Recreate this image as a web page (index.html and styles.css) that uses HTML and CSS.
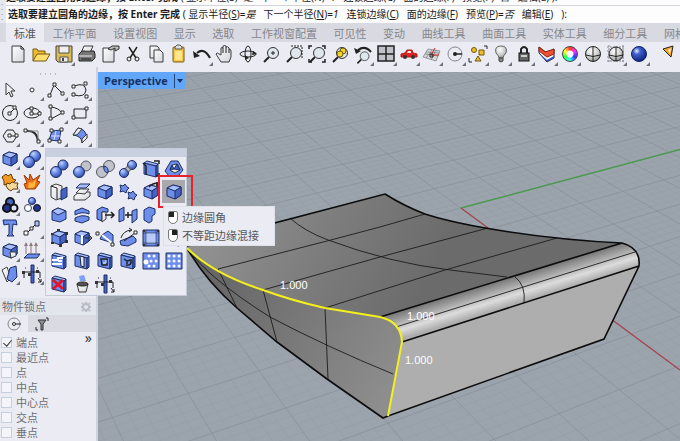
FILE: index.html
```html
<!DOCTYPE html>
<html lang="zh-CN">
<head>
<meta charset="utf-8">
<title>Rhino</title>
<link rel="stylesheet" href="styles.css">
</head>
<body>
<svg class="defs" aria-hidden="true">
  <defs>
    <radialGradient id="ball" cx=".35" cy=".3" r=".75"><stop offset="0" stop-color="#c4d4ff"/><stop offset=".45" stop-color="#6b8eea"/><stop offset="1" stop-color="#2c4aa8"/></radialGradient>
    <radialGradient id="deep" cx=".35" cy=".3" r=".75"><stop offset="0" stop-color="#e8efff"/><stop offset=".3" stop-color="#3f62cf"/><stop offset="1" stop-color="#0c1f7a"/></radialGradient>
    <radialGradient id="chrome" cx=".4" cy=".3" r=".8"><stop offset="0" stop-color="#fff"/><stop offset=".6" stop-color="#c9c9c9"/><stop offset="1" stop-color="#777"/></radialGradient>
    <linearGradient id="page" x2="1" y2="1"><stop offset="0" stop-color="#fff"/><stop offset="1" stop-color="#d4d6dc"/></linearGradient>
    <g id="cube"><path class="mid" d="M-7-4L-1-7 7-5V3L1 7-7 4Z"/><path class="lite" d="M-7-4L-1-7 7-5 1-1Z"/><path class="dark" d="M1-1L7-5V3L1 7Z"/></g>
    <g id="slab"><path class="lite" d="M-7-6L-4-8 7-5 5-3Z"/><path class="mid" d="M-7-6L5-3V8L-7 5Z"/><path class="dark" d="M5-3L7-5V6L5 8Z"/></g>
    <g id="lens"><path class="k w2" d="M-2 3L-7 8"/><circle class="glass" cx="2" cy="-1" r="5.5"/></g>
    <g id="ctrl"><path class="dark" d="M-1-9H2V9H-1Z"/><path class="k" d="M-8 4V-2H8V4M-7-6h1M5-6h1M6 4L9 8M9 8V5M9 8H6"/><path class="node fill" d="M-10-3h3v3h-3zM-4-1h3v3h-3zM4-4h3v3h-3z"/></g>
  </defs>
</svg>

<section class="command">
  <span class="grip tall"></span>
  <div class="command-lines">
    <p class="history"><b>选取要建立圆角的边缘，按 Enter 完成</b> ( 显示半径(S)=<i>是</i>&ensp; 下一个半径(N)=<i>1</i>&ensp; 连锁边缘(C)&ensp; 面的边缘(F)&ensp; 预览(P)=<i>否</i>&ensp; 编辑(E) ):</p>
    <p class="prompt"><b>选取要建立圆角的边缘，按 Enter 完成</b> ( <a href="#">显示半径(<u>S</u>)=<i>是</i></a><a href="#">下一个半径(<u>N</u>)=<i>1</i></a><a href="#">连锁边缘(<u>C</u>)</a><a href="#">面的边缘(<u>F</u>)</a><a href="#">预览(<u>P</u>)=<i>否</i></a><a href="#">编辑(<u>E</u>)</a>):</p>
  </div>
</section>

<nav class="tabs">
  <button class="tab active">标准</button><button class="tab">工作平面</button><button class="tab">设置视图</button><button class="tab">显示</button><button class="tab">选取</button><button class="tab">工作视窗配置</button><button class="tab">可见性</button><button class="tab">变动</button><button class="tab">曲线工具</button><button class="tab">曲面工具</button><button class="tab">实体工具</button><button class="tab">细分工具</button><button class="tab last">网格工具</button>
</nav>

<div class="toolbar">
  <button class="tool" aria-label="新建"><svg viewBox="-12 -12 24 24"><path class="sheet" d="M-6-8H3L6-5V8H-6Z"/><path class="k" d="M3-8V-5H6"/></svg></button>
  <button class="tool" aria-label="打开"><svg viewBox="-12 -12 24 24"><path class="gold" d="M-8 7V-5H-4L-3-3H4V0"/><path class="gold pale" d="M-8 7L-4 0H9L5 7Z"/></svg></button>
  <button class="tool more" aria-label="保存"><svg viewBox="-12 -12 24 24"><path fill="#d9ba55" stroke="#444" d="M-8-8H8V8H-6L-8 6Z"/><path fill="#eee" stroke="#555" d="M-5-8H5V-1H-5ZM-4 3H4V8H-4Z"/><path fill="#444" d="M-2 4H0V7H-2Z"/></svg></button>
  <button class="tool" aria-label="打印"><svg viewBox="-12 -12 24 24"><path class="sheet" d="M-3-8H6L3-1H-6Z"/><path fill="#777" stroke="#222" d="M-8 0L-5-3H7L8 0V4L5 7H-8Z"/><path stroke="#eee" d="M-8 2H5M-1-6H4M-2-4H3"/><path class="k" d="M-6 5H4"/></svg></button>
  <button class="tool" aria-label="文件属性"><svg viewBox="-12 -12 24 24"><path class="sheet" d="M-7-6H4V8H-7Z"/><path fill="#bbb" stroke="#333" d="M-2-5L2-8H9V-5L5-3V-6L1-4Z"/></svg></button>
  <button class="tool" aria-label="剪切"><svg viewBox="-12 -12 24 24"><path class="k w15" d="M-4-7L3 4M4-7L-3 4"/><circle class="k" cx="-4" cy="5" r="2"/><circle class="k" cx="4" cy="5" r="2"/></svg></button>
  <button class="tool" aria-label="复制"><svg viewBox="-12 -12 24 24"><path class="sheet" d="M-6-8H1L3-6V4H-6Z"/><path class="sheet" d="M-2-4H4L7-1V8H-2Z"/></svg></button>
  <button class="tool" aria-label="粘贴"><svg viewBox="-12 -12 24 24"><rect fill="#f5c947" stroke="#765b18" x="-6" y="-7" width="11" height="15" rx="1"/><path fill="#ddd" stroke="#555" d="M-4-7L-2-9H1L3-7V-5H-4Z"/><path fill="#ffe68c" d="M-4-3H3V6H-4Z"/></svg></button>
  <button class="tool more" aria-label="撤销"><svg viewBox="-12 -12 24 24"><path class="k w2" d="M-5-1Q2-7 8 4"/><path fill="#222" d="M-9-3L-8 4-2 2Z"/></svg></button>
  <button class="tool" aria-label="平移"><svg viewBox="-12 -12 24 24"><path class="sheet" d="M-4 8L-9 0Q-8-2-6 0L-4 1V-6Q-3-7-2-6V-8Q0-9 1-8V-7Q3-8 4-6V-5Q6-5 6-3V3L4 8Z"/><path class="k" d="M-2-6V-1M1-7V-1M4-5V-1"/></svg></button>
  <button class="tool" aria-label="旋转视图"><svg viewBox="-12 -12 24 24"><ellipse class="k" rx="8" ry="3"/><ellipse class="k" rx="3" ry="8"/><path fill="#222" d="M-3 1L1 4-3 6ZM5-3L9 0 4 1Z"/></svg></button>
  <button class="tool" aria-label="缩放"><svg viewBox="-12 -12 24 24"><use href="#lens"/><path class="k" d="M0-1H4M2-3V1"/></svg></button>
  <button class="tool" aria-label="框选缩放"><svg viewBox="-12 -12 24 24"><use href="#lens"/><path class="k dash" d="M-3-8H8V4"/></svg></button>
  <button class="tool" aria-label="缩放至最大范围"><svg viewBox="-12 -12 24 24"><use href="#lens"/><path class="k w15" d="M-8-5V-8H-5M5-8H8V-5M8 5V8H5M-8 5V8H-5"/></svg></button>
  <button class="tool" aria-label="缩放至选取物件"><svg viewBox="-12 -12 24 24"><use href="#lens"/><circle fill="#f4d328" stroke="#6b5a10" cx="3" cy="-3" r="3"/><circle fill="#f4d328" stroke="#6b5a10" cx="0" cy="0" r="3"/></svg></button>
  <button class="tool more" aria-label="复原视图"><svg viewBox="-12 -12 24 24"><g transform="translate(0 3) scale(.8)"><use href="#lens"/></g><path class="k w2" d="M-5-4Q2-9 8-2"/><path fill="#222" d="M-9-6L-7 0-2-3Z"/></svg></button>
  <button class="tool more" aria-label="四个工作视窗"><svg viewBox="-12 -12 24 24"><path fill="#bfc2c8" stroke="#222" stroke-width="1.5" d="M-8-8H8V7H-8ZM-8 0H8M0-8V7"/></svg></button>
  <button class="tool more" aria-label="载具"><svg viewBox="-12 -12 24 24"><path fill="#dc2222" stroke="#b01818" d="M-8 0L-4-1-2-4H3L4-1 8 0V3H-8Z"/><circle fill="#333" cx="-4" cy="3" r="2"/><circle fill="#333" cx="4" cy="3" r="2"/><path fill="#f7dede" d="M-2-1L-1-3H2V-1Z"/></svg></button>
  <button class="tool more" aria-label="工作平面"><svg viewBox="-12 -12 24 24"><path fill="#d5d7db" stroke="#777" stroke-width=".7" d="M-9 3L-4-5 8-3 4 7ZM-7 0L6 2M-6-2L7-1M-6 4L0-4M-1 6L4-4"/><path stroke="#d22" d="M-1 1L7 1M-1 1L3-6"/><path class="k" d="M-2 0h3v3h-3z"/></svg></button>
  <button class="tool more" aria-label="中心点"><svg viewBox="-12 -12 24 24"><circle class="thin" r="7"/><path class="k w15" d="M0 0H7"/><circle fill="#222" r="2"/></svg></button>
  <button class="tool more" aria-label="选取"><svg viewBox="-12 -12 24 24"><circle class="gold" cx="-4" cy="-4" r="2.5"/><path class="gold" d="M1-4H6V1H1ZM-3 7L0 2 3 7Z"/><path class="k" d="M6-8H9V-5M-9 4V8H-6"/></svg></button>
  <button class="tool more" aria-label="灯光"><svg viewBox="-12 -12 24 24"><path fill="url(#chrome)" stroke="#666" d="M-2 4Q-2 2-5-1Q-7-8 0-8Q7-8 5-1Q2 2 2 4Z"/><path fill="#888" stroke="#444" d="M-2 4H2V7L0 8-2 7Z"/></svg></button>
  <button class="tool more" aria-label="锁定"><svg viewBox="-12 -12 24 24"><path class="k w2" d="M-3-1V-5Q0-9 3-5V-1"/><rect fill="#666" stroke="#111" x="-5" y="-1" width="10" height="8"/><path fill="#ccc" d="M-3 1H3V3H-3Z"/></svg></button>
  <button class="tool more" aria-label="图层"><svg viewBox="-12 -12 24 24"><path fill="#f3f3f3" stroke="#222" d="M-8-1L0 8 7 4 7-5 0-1-8-7Z"/><path fill="#f04f36" stroke="#8c2414" d="M-8-7L-2-2 7-5V0L0 3-8-3Z"/><path fill="#344fba" d="M-7 0L0 6 7 2V4L0 8Z"/></svg></button>
  <button class="tool more" aria-label="物件属性"><span class="wheel"></span></button>
  <button class="tool" aria-label="着色"><svg viewBox="-12 -12 24 24"><circle fill="url(#chrome)" stroke="#222" r="7.5"/><path class="k" d="M0-7V7M-7 1Q0 4 7 1"/></svg></button>
  <button class="tool more" aria-label="渲染网格"><svg viewBox="-12 -12 24 24"><path class="thin dash" d="M-9-7H9M-9-3H9M-9 3H9M-9 7H9M-7-9V9M7-9V9"/><circle fill="url(#chrome)" stroke="#222" r="7"/><path class="k" d="M0-7V7M-7 1Q0 4 7 1"/></svg></button>
  <button class="tool more" aria-label="渲染"><svg viewBox="-12 -12 24 24"><circle fill="url(#deep)" stroke="#10205c" r="7.5"/></svg></button>
  <button class="tool spaced" aria-label="聚光灯"><svg viewBox="-12 -12 24 24"><path fill="#f7a22b" stroke="#222" d="M-5-5L5-8 3 3Z"/><path fill="#fff1c2" d="M0-4L3-6 2 0Z"/></svg></button>
</div>

<main class="workspace">
  <aside class="sidebar">
    <span class="grip wide"></span>
    <div class="tools four">
      <button class="tool" aria-label="选择"><svg viewBox="-12 -12 24 24"><path class="sheet" d="M-4-7V5L-1 2 1 7 3 6 1 1H5Z"/></svg></button>
      <button class="tool more" aria-label="点"><svg viewBox="-12 -12 24 24"><circle class="node" r="2"/></svg></button>
      <button class="tool more" aria-label="多重直线"><svg viewBox="-12 -12 24 24"><path class="k" d="M-6 5L-2-5 6 3"/><path class="node" d="M-8 4h3v3h-3zM-3-7h3v3h-3zM5 2h3v3h-3z"/></svg></button>
      <button class="tool more" aria-label="曲线"><svg viewBox="-12 -12 24 24"><path class="k" d="M-6-4Q5-8 6 0Q5 8-6 5"/><path class="node" d="M-8-5h3v3h-3zM4-8h3v3h-3zM-8 3h3v3h-3zM5 5h3v3h-3z"/></svg></button>
      <button class="tool more" aria-label="圆"><svg viewBox="-12 -12 24 24"><circle class="k" r="7.5"/><path class="k" d="M0 0L5-5"/><path class="node" d="M-2-1h3v3h-3zM3-7h3v3h-3z"/></svg></button>
      <button class="tool more" aria-label="椭圆"><svg viewBox="-12 -12 24 24"><ellipse class="k" rx="8" ry="5"/><path class="k" d="M0-5V1H8"/><path class="node" d="M-2-6h3v3h-3zM-2-1h3v3h-3zM6-1h3v3h-3z"/></svg></button>
      <button class="tool more" aria-label="圆弧"><svg viewBox="-12 -12 24 24"><path class="k" d="M-5-6Q3-5 6 0L-5 6Z"/><path class="node" d="M-7-8h3v3h-3zM-7 4h3v3h-3zM5-2h3v3h-3z"/></svg></button>
      <button class="tool more" aria-label="矩形"><svg viewBox="-12 -12 24 24"><path class="k" d="M-6-4H6V5H-6Z"/><path class="node" d="M-8 3h3v3h-3zM5-6h3v3h-3z"/></svg></button>
      <button class="tool more" aria-label="多边形"><svg viewBox="-12 -12 24 24"><path class="k" d="M-3-6H3L7 0 3 6H-3L-7 0ZM0 0H6"/><path class="node" d="M-2-2h3v3h-3zM5-2h3v3h-3z"/></svg></button>
      <button class="tool more" aria-label="曲线圆角"><svg viewBox="-12 -12 24 24"><path class="k w2" d="M-5-5Q5-6 6 6"/><path class="thin" d="M-5-5H6V6"/><path class="node" d="M-8-7h3v3h-3zM5 4h3v3h-3z"/></svg></button>
      <button class="tool more" aria-label="曲面"><svg viewBox="-12 -12 24 24"><path class="mid" d="M-4-5L5-6 3 5-7 4Z"/><path stroke="#d9e3ff" d="M-5 0L4 0M0-5L-2 4"/><path class="node" d="M-6-7h3v3h-3zM4-8h3v3h-3zM-8 3h3v3h-3zM2 4h3v3h-3z"/></svg></button>
      <button class="tool more" aria-label="扫掠曲面"><svg viewBox="-12 -12 24 24"><path class="mid" d="M-2-8Q6-7 7 2L2 7Q2 0-7-1Z"/><path class="sheet" d="M-7-1L-2-8 2-7-3-1Z"/><path class="sheet" d="M2 7L2 3 7-2V2Z"/></svg></button>
    </div>
    <div class="tools two">
      <button class="tool more" aria-label="立方体"><svg viewBox="-12 -12 24 24"><use href="#cube"/></svg></button>
      <button class="tool more" aria-label="布尔运算"><svg viewBox="-12 -12 24 24"><circle class="ball" cx="3" cy="-3" r="5.5"/><circle class="ball" cx="-3" cy="3" r="5.5"/></svg></button>
      <button class="tool more" aria-label="组合"><svg viewBox="-12 -12 24 24"><path fill="#f29b20" stroke="#5f3c06" d="M-8-5L-4-8-2-6 1-8 3-3 6-2 3 1 2 3-2 2-6 3-6-1Z"/><path fill="#f7d89a" stroke="#5f3c06" d="M-3 1L0 2 2 0 5 1 8 1 7 4 8 7 3 7 1 9-2 7-4 4Z"/></svg></button>
      <button class="tool" aria-label="炸开"><svg viewBox="-12 -12 24 24"><path fill="#ef6c17" stroke="#9c3a06" d="M-8-7L-3-2-2-8 1-2 8-7 5-1 8 0 3 7H-6L-8 2-5 1Z"/><path fill="#ffb43a" d="M-3 0L0 1 4-3 3 4 1 6H-4Z"/></svg></button>
      <button class="tool more" aria-label="群组"><svg viewBox="-12 -12 24 24"><circle fill="#4467bf" stroke="#111" stroke-width="2" cy="-3" r="4"/><circle fill="#22348c" stroke="#111" stroke-width="2" cx="-3" cy="3" r="4"/><circle fill="#dde4fa" stroke="#111" stroke-width="2" cx="4" cy="3" r="3.5"/></svg></button>
      <button class="tool" aria-label="取消群组"><svg viewBox="-12 -12 24 24"><circle class="ball" cy="-4" r="3.5"/><circle fill="#fff" stroke="#345" cx="-4" cy="3" r="3.5"/><circle fill="#22348c" stroke="#111" cx="5" cy="3" r="3.5"/></svg></button>
      <button class="tool" aria-label="文字"><svg viewBox="-12 -12 24 24"><path class="mid" d="M-7-8H6L7-3 3-4 2 6 4 8H-3L-1 6-1-4-6-3Z"/></svg></button>
      <button class="tool more" aria-label="移动"><svg viewBox="-12 -12 24 24"><path class="k" d="M-4 4L3-3"/><path fill="#abc0ff" stroke="#223" d="M3-7h4v5H3z"/><path class="node" d="M-8 3h4v4h-4zM-2-1h3v3h-3z"/></svg></button>
      <button class="tool more" aria-label="实体编辑"><svg viewBox="-12 -12 24 24"><use href="#cube"/><path class="sheet" d="M0 1H6V5L1 7Z"/></svg></button>
      <button class="tool more" aria-label="投影"><svg viewBox="-12 -12 24 24"><path class="mid" d="M-8 7L-4 3H8L5 7Z"/><path stroke="#8d7878" d="M-6-7V3M-1-7V3M4-7V3"/><path fill="#8d7878" d="M-8-5h4L-6-9zM-3-5h4L-1-9zM2-5h4L4-9z"/></svg></button>
      <button class="tool more" aria-label="偏移"><svg viewBox="-12 -12 24 24"><path class="sheet" d="M-8-4L-3-7 1 4-3 8Z"/><path class="mid" d="M0-6L6-8 7 3 2 8-3 5Z"/></svg></button>
      <button class="tool more" aria-label="控制点"><svg viewBox="-12 -12 24 24"><use href="#ctrl"/></svg></button>
    </div>

    <section class="osnap">
      <header class="osnap-title"><span>物件锁点</span><svg class="gear" viewBox="-6 -6 12 12"><circle r="3" fill="none" stroke="#b9bcc4" stroke-width="2"/><path stroke="#b9bcc4" stroke-width="2" d="M0-5V-3M0 3V5M-5 0H-3M3 0H5M-4-4L-3-3M3-3L4-4M-4 4L-3 3M3 3L4 4"/></svg></header>
      <div class="osnap-tabs">
        <button class="otab on" aria-label="锁点"><svg viewBox="-12 -12 24 24"><circle class="thin" r="6"/><circle class="node" r="1.5"/><path class="k" d="M1 0H7"/></svg></button>
        <button class="otab" aria-label="过滤器"><svg viewBox="-12 -12 24 24"><path fill="#8d8f96" stroke="#333" d="M-4-4H4L1 0V6H-1V0Z"/><path class="k" d="M4-6H6V-3M-6 3V6H-4"/></svg></button>
      </div>
      <div class="snaps">
        <div class="snap-list">
          <label><input type="checkbox" checked>端点</label>
          <label><input type="checkbox">最近点</label>
          <label><input type="checkbox">点</label>
          <label><input type="checkbox">中点</label>
          <label><input type="checkbox">中心点</label>
          <label><input type="checkbox">交点</label>
          <label><input type="checkbox">垂点</label>
        </div>
        <button class="expand" aria-label="展开">»</button>
      </div>
    </section>
  </aside>

  <section class="viewport">
    <svg class="scene" viewBox="98 72 582 369" preserveAspectRatio="xMinYMin slice">
      <defs>
        <linearGradient id="top" gradientUnits="userSpaceOnUse" x1="230" y1="200" x2="420" y2="300"><stop offset="0" stop-color="#909090"/><stop offset=".5" stop-color="#7c7c7c"/><stop offset="1" stop-color="#6b6b6b"/></linearGradient>
        <linearGradient id="side" gradientUnits="userSpaceOnUse" x1="190" y1="250" x2="400" y2="380"><stop offset="0" stop-color="#606060"/><stop offset="1" stop-color="#8e8e8e"/></linearGradient>
        <linearGradient id="fillet" gradientUnits="userSpaceOnUse" x1="510" y1="277" x2="518" y2="303"><stop offset="0" stop-color="#747474"/><stop offset=".4" stop-color="#b0b0b0"/><stop offset=".68" stop-color="#dcdcdc"/><stop offset="1" stop-color="#adadad"/></linearGradient>
      </defs>
      <g id="grid"></g>
      <path class="axis-y" d="M461 208L680 149.5"/>
      <path class="axis-x" d="M461 208L680 370"/>
      <path fill="url(#top)" d="M187 246L385 194Q404 206 425 214C462 226 540 239 622 243L380 317Q353 313 325 308Q290 300 263 290Q213 274 187 248Z"/>
      <path fill="url(#side)" d="M187 248Q213 274 263 290Q290 300 325 308L380 317Q401 322 402 342L388 416 383 418 327 379 277 342 237 308Q205 280 187 248Z"/>
      <path fill="url(#fillet)" d="M380 317L622 243Q640 248 639 266L402 342Q401 322 380 317Z"/>
      <path fill="#aeaeae" d="M402 342L639 266 604 339 388 416Z"/>
      <path class="iso" d="M218 269L327 241 380 227 425 214M263 290L380 257 488 228M325 308L445 270 557 238M290 218Q304 231 328 240 Q390 263 450 270L507 277M218 269L237 308M263 290L277 342M325 308L328 379M187 248Q208 278 270 317 Q327 347 393 374M515 277Q526 285 524 303M396 327L635 252"/>
      <path class="edge" d="M187 246L385 194Q404 206 425 214C462 226 540 239 622 243Q641 248 639 266L604 339 388 416 383 418 327 379 277 342 237 308Q205 280 187 248M380 317L622 243M402 342L639 266"/>
      <path class="picked" d="M187 248Q213 274 263 290Q290 300 325 308L380 317Q401 322 402 342L388 416"/>
      <g class="radii"><text x="280" y="289">1.000</text><text x="407" y="320">1.000</text><text x="405" y="364">1.000</text></g>
    </svg>
    <button class="view-name"><span>Perspective</span><span class="caret"></span></button>
  </section>

  <div class="palette">
    <div class="palette-head"></div>
    <div class="palette-grid">
      <button class="tool" aria-label="布尔联集"><svg viewBox="-12 -12 24 24"><circle class="ball" cx="4" cy="-4" r="5"/><circle class="ball" cx="-3" cy="3" r="5.5"/></svg></button>
      <button class="tool" aria-label="布尔差集"><svg viewBox="-12 -12 24 24"><circle class="ghost" cx="4" cy="-3" r="5"/><circle class="ball" cx="-3" cy="3" r="5.5"/></svg></button>
      <button class="tool" aria-label="布尔交集"><svg viewBox="-12 -12 24 24"><circle class="ghost" cx="4" cy="-3" r="5.5"/><circle class="ghost" cx="-3" cy="3" r="5.5"/><path class="mid" d="M-1-3Q4-2 3 4Q-2 3-1-3Z"/></svg></button>
      <button class="tool" aria-label="布尔分割"><svg viewBox="-12 -12 24 24"><circle class="ball" cx="4" cy="-4" r="4.5"/><circle class="ball" cx="-4" cy="4" r="4.5"/><circle class="ghost" cx="0" cy="0" r="2.5"/></svg></button>
      <button class="tool" aria-label="布尔运算两个物件"><svg viewBox="-12 -12 24 24"><use href="#slab"/><path class="k w15" d="M-8-6L-5-3V6M3-8H8V-5M5 7H8V4"/></svg></button>
      <button class="tool" aria-label="自动建立实体"><svg viewBox="-12 -12 24 24"><path class="mid" d="M-3-8H4L9 1 4 7H-5L-9 2Z"/><path class="sheet" d="M-2-4L3-5 6 1 1 4-4 1Z"/><path class="dark" d="M-2-4L0 0-4 1ZM3-5L6 1 0 0Z"/></svg></button>

      <button class="tool" aria-label="封闭的多重曲面薄壳"><svg viewBox="-12 -12 24 24"><path class="sheet" d="M-8-6L-3-8 3-6V6L-3 8-8 5Z"/><path class="k" d="M-8-6L-2-4V7"/><path class="dark" d="M2-2L8-5V5L2 8Z"/></svg></button>
      <button class="tool" aria-label="加盖"><svg viewBox="-12 -12 24 24"><path class="sheet" d="M-8 4L-3 0H8V4L3 8H-8Z"/><path class="sheet" d="M-6 1L-2-3H7L3 2Z"/><path class="lite" d="M-6-4L-2-8H8L4-4Z"/></svg></button>
      <button class="tool" aria-label="抽离曲面"><svg viewBox="-12 -12 24 24"><use href="#cube"/></svg></button>
      <button class="tool" aria-label="合并面"><svg viewBox="-12 -12 24 24"><path class="mid" d="M-8-7L-5-6-3-8-1-5 1-4-1-2-2 1-5-1-8 0-7-3ZM0 0L3 1 5-1 7 2 9 3 7 5 6 8 3 6 0 7 1 4Z"/></svg></button>
      <button class="tool" aria-label="不等距圆角"><svg viewBox="-12 -12 24 24"><use href="#cube"/><path class="k w15" d="M-2-5Q1-9 8-9"/><path class="node fill" d="M5-10h4v4H5z"/></svg></button>
      <button class="tool chosen" aria-label="边缘圆角"><svg viewBox="-12 -12 24 24"><use href="#cube"/></svg></button>

      <button class="tool" aria-label="线切割"><svg viewBox="-12 -12 24 24"><path class="mid" d="M-7-4L-1-7 7-4V4L1 7-7 5Z"/><path class="lite" d="M-7-4L-1-7 7-4-1 0Z"/></svg></button>
      <button class="tool" aria-label="分割"><svg viewBox="-12 -12 24 24"><path class="mid" d="M-7-4L0-7 7-4V-1Q0-4-7 0ZM-7 3Q0-1 7 2V5L0 8-7 6Z"/></svg></button>
      <button class="tool" aria-label="推拉面"><svg viewBox="-12 -12 24 24"><path class="mid" d="M-8-5L-3-8 3-6V-3H-3V6L-8 4Z"/><path class="sheet" d="M-3-3H1V4L-3 7Z"/><path class="k w15" d="M0 0H9M6-3L9 0 6 3"/></svg></button>
      <button class="tool" aria-label="移动面"><svg viewBox="-12 -12 24 24"><path class="mid" d="M-9-5L-4-8V5L-9 7ZM4-4L9-6V4L4 8Z"/><path class="k w15" d="M-3 0H4M0-3V3"/></svg></button>
      <button class="tool" aria-label="移动边缘"><svg viewBox="-12 -12 24 24"><path class="mid" d="M-7-5L-2-8 4-6V-1L1 1V6L-2 8-7 5Z"/></svg></button>
      <button class="tool" aria-label="旋转面"><svg viewBox="-12 -12 24 24"><use href="#cube"/></svg></button>

      <button class="tool" aria-label="打开控制点"><svg viewBox="-12 -12 24 24"><use href="#cube"/><path class="node fill" d="M-8-5h2v2h-2zM-2-9h3v2h-3zM6-6h3v3H6zM-8 4h3v2h-3zM0 6h3v3H0zM6 2h3v3H6z"/></svg></button>
      <button class="tool" aria-label="移动实体边缘"><svg viewBox="-12 -12 24 24"><use href="#cube"/><path class="k" d="M3 0H10M7-3L10 0 7 3"/><path stroke="#fff" stroke-width="2" d="M0-3V6"/></svg></button>
      <button class="tool" aria-label="楔形"><svg viewBox="-12 -12 24 24"><path class="mid" d="M-3-3L3-7 8-3V5L-5 1Z"/><path stroke="#fff" stroke-width="2" d="M-3-3L7 5"/><path class="node" d="M-9-6h3v3h-3zM6 5h3v3H6z"/></svg></button>
      <button class="tool" aria-label="旋转边缘"><svg viewBox="-12 -12 24 24"><path class="mid" d="M-8 3L5-2 8 1V4L0 8-7 7Z"/><path class="k" d="M-7 0Q-5-7 3-8M1-10L4-8 1-6M-4 3L7-5"/><path class="node" d="M6-7h3v3H6z"/></svg></button>
      <button class="tool" aria-label="挤出"><svg viewBox="-12 -12 24 24"><path class="mid" d="M-8-8H8V8H-8Z"/><path fill="#b9cbfd" d="M-5-5H5V5H-5Z"/><path class="k" d="M-5-8V8M5-8V8M-8-5H8M-8 5H8" stroke-opacity=".5"/><path class="node fill" d="M-8-8h2v2h-2zM6-8h2v2H6zM-8 6h2v2h-2zM6 6h2v2H6z"/></svg></button>
      <button class="tool" aria-label="凸缘"><svg viewBox="-12 -12 24 24"><use href="#slab"/></svg></button>

      <button class="tool" aria-label="肋"><svg viewBox="-12 -12 24 24"><use href="#slab"/><path stroke="#fff" stroke-width="2" fill="none" d="M-7-1H-1V-3H4M-7 3H3M-1 0H3"/></svg></button>
      <button class="tool" aria-label="圆洞"><svg viewBox="-12 -12 24 24"><use href="#slab"/><path fill="#dfe7ff" stroke="#223" d="M-2-5L2-4V6L-1 5Z"/></svg></button>
      <button class="tool" aria-label="放置洞"><svg viewBox="-12 -12 24 24"><use href="#slab"/><path class="k w15" d="M-4-2H2V4H-3Z"/><path stroke="#dfe7ff" d="M-2 2H1V-1"/></svg></button>
      <button class="tool" aria-label="旋转成洞"><svg viewBox="-12 -12 24 24"><use href="#slab"/><path class="k w15" d="M-4-2L-1 0 3-1Q4 5-2 4M-1 0V3"/></svg></button>
      <button class="tool" aria-label="环形阵列洞"><svg viewBox="-12 -12 24 24"><path class="mid" d="M-8-8H8V8H-8Z"/><path class="holes" d="M-2-5h.1M3-5h.1M0 0h.1M5 0h.1M-2 5h.1M3 5h.1"/><circle fill="#fff" cx="-5" cy="1" r="2.5"/></svg></button>
      <button class="tool" aria-label="阵列洞"><svg viewBox="-12 -12 24 24"><path class="mid" d="M-8-8H8V8H-8Z"/><path class="holes" d="M-5-5h.1M0-5h.1M5-5h.1M-5 0h.1M0 0h.1M5 0h.1M-5 5h.1M0 5h.1M5 5h.1"/></svg></button>

      <button class="tool" aria-label="删除洞"><svg viewBox="-12 -12 24 24"><use href="#slab"/><path stroke="#e3132a" stroke-width="3" d="M-6-4L4 5M4-4L-6 5"/></svg></button>
      <button class="tool" aria-label="移除"><svg viewBox="-12 -12 24 24"><path class="sheet" d="M-5 0H6L4 8H-3Z"/><ellipse fill="#555" stroke="#222" cx=".5" cy="0" rx="5.5" ry="2"/><path fill="#7f9ff8" d="M-3-8L2-9 4-3H-2Z"/></svg></button>
      <button class="tool" aria-label="控制点编辑"><svg viewBox="-12 -12 24 24"><use href="#ctrl"/></svg></button>
    </div>
    <span class="callout"></span>
    <div class="tip">
      <p><span class="mouse left"></span>边缘圆角</p>
      <p><span class="mouse right"></span>不等距边缘混接</p>
    </div>
  </div>
</main>
<script src="grid.js"></script>
</body>
</html>
```
FILE: styles.css
```css
* { box-sizing: border-box; }
html, body { height: 100%; }
body {
  margin: 0;
  display: flex;
  flex-direction: column;
  overflow: hidden;
  background: #ebecf3;
  color: #1c1c1c;
  font: 11px/15px "Noto Sans", "Noto Sans CJK SC", sans-serif;
}
p { margin: 0; }
button { margin: 0; padding: 0; border: 0; background: none; color: inherit; font: inherit; }
.defs { position: absolute; width: 0; height: 0; }

/* command prompt */
.command { display: flex; flex: none; height: 23px; background: #e6e8ef; }
.grip { flex: none; background: radial-gradient(circle, #b6bac4 1px, transparent 1px) 0 0 / 4px 5px; }
.grip.tall { width: 4px; margin: 2px 2px 2px 0; }
.command-lines { flex: 1; min-width: 0; background: #fdfdfd; font-size: 10px; white-space: nowrap; }
.history { height: 6px; display: flex; align-items: flex-end; overflow: hidden; border-bottom: 1px solid #d3d4da; white-space: pre; }
.prompt { padding: 1px 2px; line-height: 15px; }
.prompt a { margin-right: 8px; color: inherit; text-decoration: none; }

/* toolbar tabs */
.tabs { display: flex; flex: none; justify-content: space-between; height: 19px; padding-left: 6px; background: #d9dae1; color: #85868c; }
.tab { flex: none; padding: 2px 0 0; white-space: nowrap; }
.tab.active { margin-right: -8px; padding: 2px 8px 0; background: #ebecf3; color: #55565b; }
.tab.last { width: 16px; overflow: hidden; text-align: left; }

/* tool buttons */
.toolbar { display: flex; flex: none; height: 25px; padding: 0 0 0 6px; overflow: hidden; }
.tool { position: relative; display: flex; flex: none; align-items: center; justify-content: center; width: 23px; height: 23px; }
.toolbar .tool { height: 24px; }
.tool svg, .otab svg { flex: none; width: 24px; height: 24px; fill: none; }
.tool.spaced { margin-left: 6px; }
.more::after {
  content: "";
  position: absolute;
  right: 0;
  bottom: 0;
  border: 2px solid #70727a;
  border-top-color: transparent;
  border-left-color: transparent;
}
.wheel {
  width: 16px;
  height: 16px;
  border: 1px solid #444;
  border-radius: 50%;
  background: radial-gradient(circle, #fff 0 3px, transparent 4px), conic-gradient(#f33, #f3f, #33f, #3ff, #3f3, #ff3, #f33);
}

.k { fill: none; stroke: #222; }
.w15 { stroke-width: 1.5; }
.w2 { stroke-width: 2; }
.thin { fill: none; stroke: #85878e; }
.dash { stroke-dasharray: 2 1; }
.sheet { fill: url(#page); stroke: #3b3b40; }
.glass { fill: #dfe6ee; stroke: #333; }
.gold { fill: #f2bd2c; stroke: #75570c; }
.gold.pale { fill: #ffdf6e; }
.lite { fill: #a9c0ff; stroke: #1e2e66; }
.mid { fill: #6d8eea; stroke: #1e2e66; }
.dark { fill: #4463c4; stroke: #1e2e66; }
.node { fill: #fff; stroke: #2c2c2c; }
.node.fill { fill: #333; stroke: none; }
.ball { fill: url(#ball); stroke: #1d2a5c; }
.ghost { fill: #9da1ab; fill-opacity: .55; stroke: #555861; }
.holes { stroke: #f3f6ff; stroke-width: 3; stroke-linecap: round; }

/* left column */
.workspace { position: relative; display: flex; flex: 1; min-height: 0; }
.sidebar { display: flex; flex: none; flex-direction: column; width: 98px; border-right: 2px solid #cfd3de; }
.grip.wide { width: 18px; height: 4px; margin: 5px 0 2px 38px; background-size: 5px 4px; }
.tools { display: grid; flex: none; }
.tools.four { grid-template-columns: 20px repeat(3, 24px); }
.tools.two { grid-template-columns: 20px 24px; }
.tools .tool { width: auto; }

.osnap { flex: 1; min-height: 0; margin-top: 13px; overflow: hidden; color: #6e6f74; }
.osnap-title { display: flex; align-items: center; justify-content: space-between; height: 17px; padding: 0 4px 0 2px; background: #e3e5ec; }
.gear { width: 12px; height: 12px; }
.osnap-tabs { display: flex; height: 17px; background: #dadbe2; }
.otab { display: flex; align-items: center; justify-content: center; width: 28px; overflow: hidden; }
.otab.on { background: #ebecf3; }
.snaps { display: flex; justify-content: space-between; padding: 3px 4px 0 1px; }
.snap-list label { display: flex; align-items: center; gap: 4px; height: 15px; }
.snap-list input {
  display: grid;
  appearance: none;
  width: 11px;
  height: 11px;
  margin: 0;
  border: 1px solid #c6cfdd;
  background: #f3f5fa;
}
.snap-list input:checked::before {
  content: "";
  width: 4px;
  height: 7px;
  margin-left: 3px;
  border: solid #333;
  border-width: 0 1px 1px 0;
  transform: rotate(40deg);
}
.expand { align-self: flex-start; color: #333; font-size: 14px; line-height: 5px; }

/* 3D viewport */
.viewport { position: relative; flex: 1; min-width: 0; margin-top: 5px; background: #9ba4ac; overflow: hidden; }
.scene { display: block; width: 100%; height: 100%; fill: none; }
.scene text { fill: #fff; font: 11px "Liberation Sans", sans-serif; }
.major { stroke: #868f98; stroke-width: .7; }
.minor { stroke: #929ba4; stroke-width: .4; }
.axis-y { stroke: #4c9a50; stroke-width: 1.5; }
.axis-x { stroke: #a8444c; stroke-width: 1.3; }
.iso { stroke: #1c1c1c; stroke-width: .9; }
.edge { stroke: #0c0c0c; stroke-width: 1.6; }
.picked { stroke: #f4f01e; stroke-width: 2; }
.view-name {
  position: absolute;
  top: 0;
  left: 0;
  display: flex;
  align-items: center;
  gap: 6px;
  height: 17px;
  padding-left: 6px;
  background: #62a6fa;
  color: #17315c;
  font: bold 11px "Open Sans", sans-serif;
}
.caret { display: flex; align-items: center; height: 14px; padding: 0 2px; border-left: 1px solid #24467c; }
.caret::before { content: ""; border: 3px solid transparent; border-top: 4px solid #17315c; border-bottom: 0; }

/* floating solid-tools palette */
.palette { position: absolute; top: 81px; left: 45px; border: 1px solid #c5cbd9; background: #ebecf3; }
.palette-head { height: 8px; background: #c8d0df; }
.palette-grid { display: grid; grid-template-columns: repeat(6, 23px); padding: 0 1px; }
.tool.chosen { background: #a9a9ad; }
.callout { position: absolute; top: 26px; left: 112px; width: 35px; height: 33px; border: 2px solid #e8222c; }
.tip { position: absolute; top: 57px; left: 117px; padding: 1px 15px 1px 4px; border: 1px solid #dfe1ea; background: #ebecf3; color: #55565b; white-space: nowrap; }
.tip p { display: flex; align-items: center; gap: 4px; height: 18px; }
.mouse { width: 10px; height: 13px; border: 1px solid #777; border-radius: 2px 2px 5px 5px; background: linear-gradient(#222, #222) 0 0 / 5px 5px no-repeat #fff; }
.mouse.right { background-position: 100% 0; }
```
FILE: grid.js
```javascript
// Ground plane in perspective: every line of a family runs to its vanishing
// point and crosses the base row at an even step, with a major line each fifth.
const base = 440;
const families = [
  { vx: -226, vy: -300, origin: 774, step: 93, from: -12, to: 14 },
  { vx: 2364, vy: -300, origin: -408, step: 150, from: -26, to: 22 }
];
const grid = document.getElementById('grid');
for (const kind of ['minor', 'major']) {
  let d = '';
  for (const f of families) {
    for (let i = f.from * 5; i <= f.to * 5; i++) {
      if ((i % 5 === 0) !== (kind === 'major')) continue;
      const x = f.origin + i * f.step / 5;
      const t = 1.2;
      d += `M${f.vx} ${f.vy}L${f.vx + (x - f.vx) * t} ${f.vy + (base - f.vy) * t}`;
    }
  }
  const path = document.createElementNS('http://www.w3.org/2000/svg', 'path');
  path.setAttribute('class', kind);
  path.setAttribute('d', d);
  grid.append(path);
}
```
